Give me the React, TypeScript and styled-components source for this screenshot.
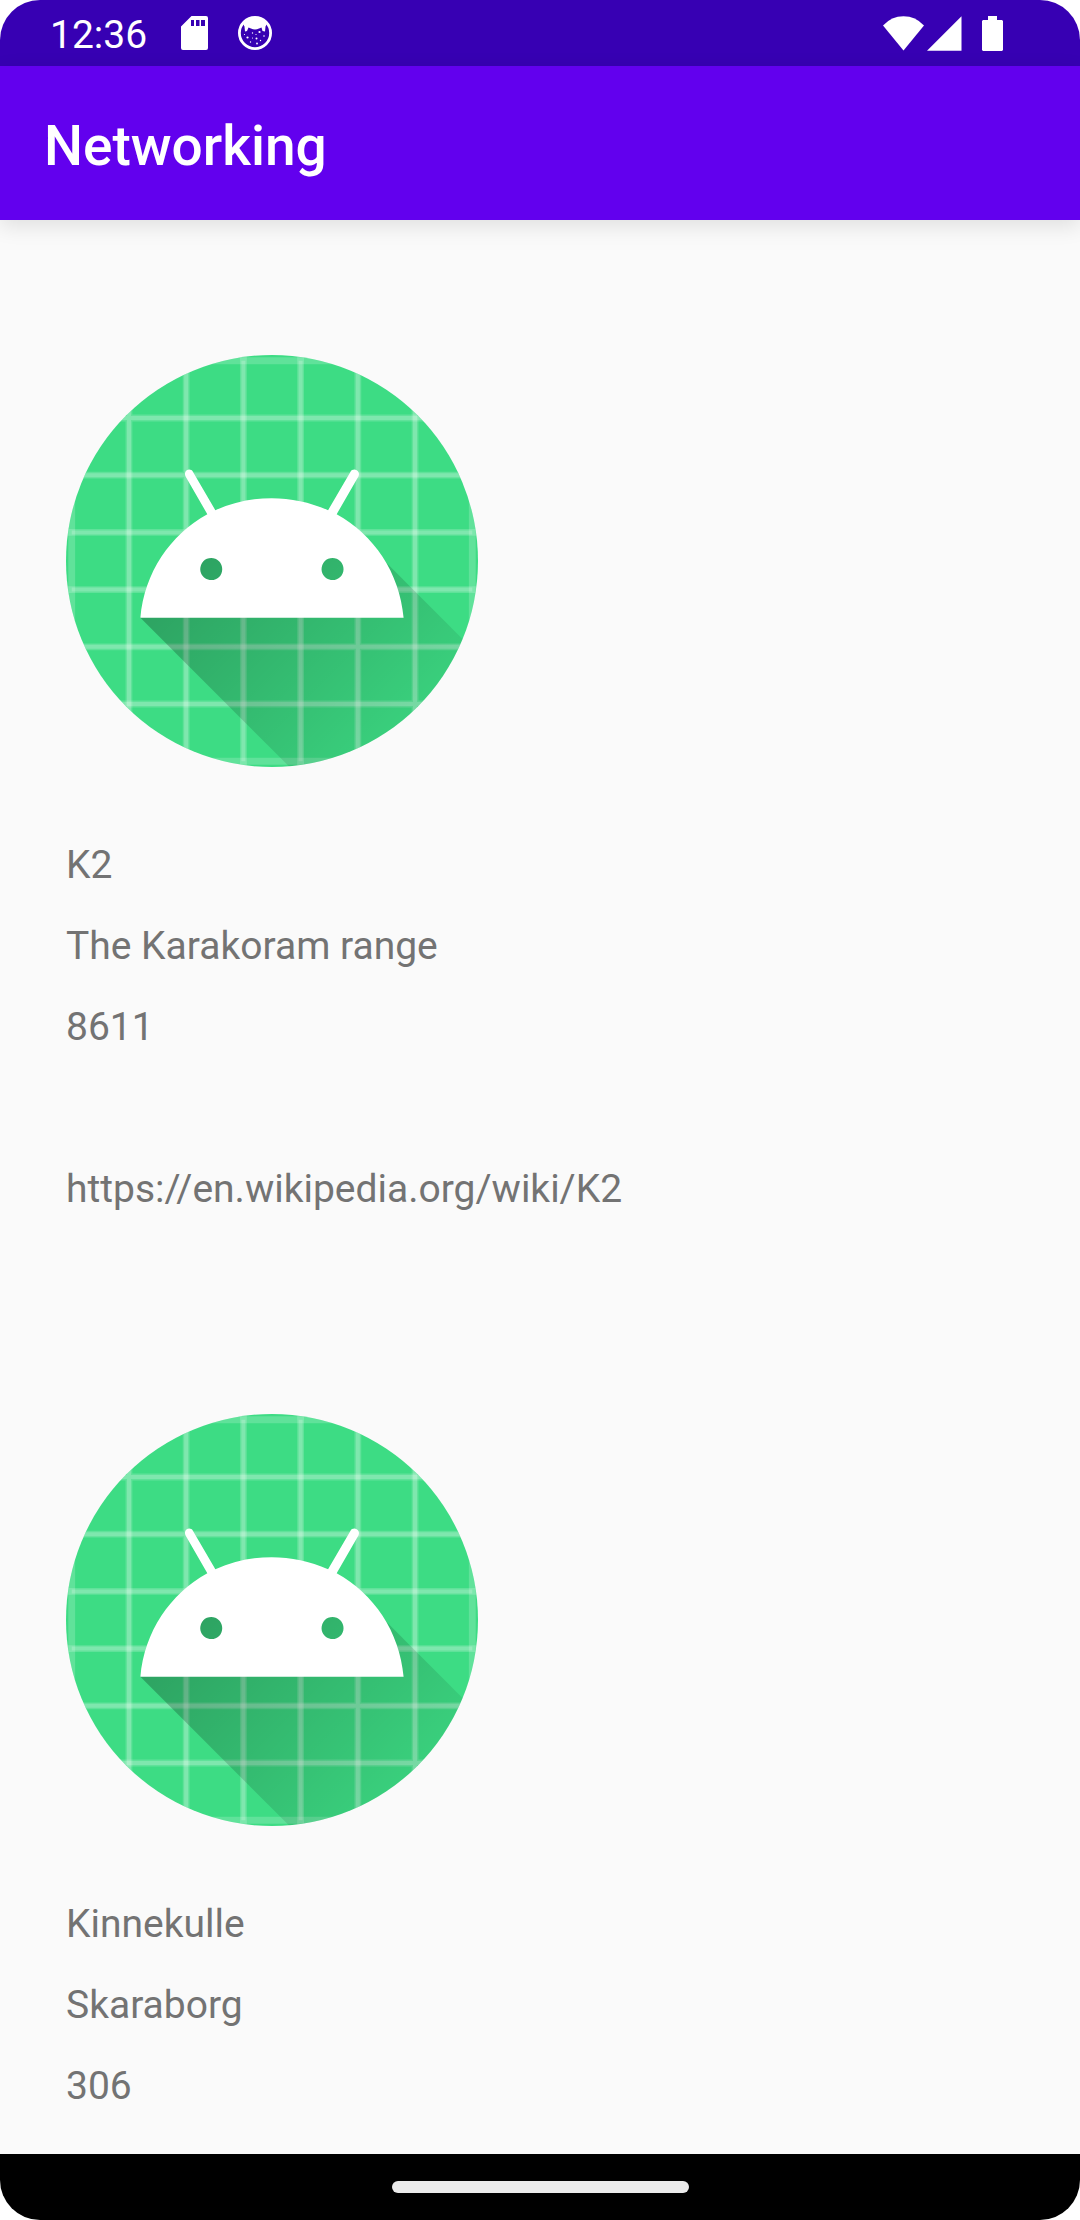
import React from "react";
import styled, { createGlobalStyle } from "styled-components";

const GlobalStyle = createGlobalStyle`
  * { box-sizing: border-box; }
  body {
    margin: 0;
    background: #ffffff;
    font-family: Roboto, "Noto Sans", sans-serif;
  }
`;

const Screen = styled.div`
  display: flex;
  flex-direction: column;
  height: 100vh;
  overflow: hidden;
  border-radius: 40px;
  background: #fafafa;
`;

const StatusBar = styled.div`
  display: flex;
  flex: none;
  align-items: center;
  justify-content: space-between;
  height: 66px;
  padding: 0 77px 0 50px;
  background: #3700b3;
  color: #ffffff;
`;

const StatusGroup = styled.div<{ $gap: number }>`
  display: flex;
  align-items: center;
  gap: ${(p) => p.$gap}px;
`;

const Clock = styled.time`
  padding: 4px 4px 0 0;
  font-size: 39px;
  line-height: 62px;
`;

const Glyph = styled.svg`
  display: block;
  flex: none;
  fill: currentColor;
`;

const AppBar = styled.header`
  z-index: 1;
  display: flex;
  flex: none;
  align-items: center;
  height: 154px;
  padding: 6px 44px 0;
  background: #6200ee;
  box-shadow: 0 6px 20px rgba(0, 0, 0, 0.11);
`;

const Title = styled.h1`
  margin: 0;
  color: #ffffff;
  font-size: 55px;
  font-weight: 500;
  line-height: 64px;
`;

const List = styled.ul`
  flex: 1;
  min-height: 0;
  margin: 0;
  padding: 0;
  overflow: hidden;
  list-style: none;
`;

const Item = styled.li`
  display: flex;
  flex-direction: column;
  align-items: flex-start;
  padding: 135px 66px 49px;
`;

const Picture = styled.svg`
  display: block;
  width: 412px;
  height: 412px;
  margin-bottom: 58px;
  border-radius: 50%;
`;

const Row = styled.div`
  min-height: 81px;
  color: #737373;
  font-size: 39px;
  line-height: 81px;
`;

const WikiLink = styled.a`
  color: inherit;
  text-decoration: none;
`;

const NavigationBar = styled.nav`
  display: flex;
  flex: none;
  align-items: center;
  justify-content: center;
  height: 66px;
  background: #000000;
`;

const HomeHandle = styled.button`
  width: 297px;
  height: 12px;
  padding: 0;
  border: 0;
  border-radius: 6px;
  background: #ebebeb;
`;

const INNER = [29, 39, 49, 59, 69, 79];
const OUTER = [19, ...INNER, 89];

function LauncherIcon({ id }: { id: string }) {
  return (
    <Picture viewBox="18 18 72 72" role="img" aria-label="Mountain picture">
      <defs>
        <linearGradient id={id} gradientUnits="userSpaceOnUse" x1="42.95" y1="49.6" x2="85.85" y2="92.5">
          <stop offset="0" stopColor="#000" stopOpacity="0.267" />
          <stop offset="1" stopColor="#000" stopOpacity="0" />
        </linearGradient>
      </defs>
      <rect x="18" y="18" width="72" height="72" fill="#3ddc84" />
      <g stroke="#fff" strokeOpacity="0.18" strokeWidth="1.2">
        {OUTER.map((n) => (
          <path key={n} d={`M${n},0V108M0,${n}H108`} />
        ))}
      </g>
      <g stroke="#fff" strokeOpacity="0.2" strokeWidth="0.7">
        {INNER.map((n) => (
          <path key={n} d={`M${n},19V89M19,${n}H89`} />
        ))}
      </g>
      <path
        fill={`url(#${id})`}
        d="M31,63.928c0,0 6.4,-11 12.1,-13.1c7.2,-2.6 26,-1.4 26,-1.4l38.1,38.1L107,108.928l-32,-1L31,63.928z"
      />
      <path
        fill="#fff"
        d="M65.3,45.828l3.8,-6.6c0.2,-0.4 0.1,-0.9 -0.3,-1.1c-0.4,-0.2 -0.9,-0.1 -1.1,0.3l-3.9,6.7c-6.3,-2.8 -13.4,-2.8 -19.7,0l-3.9,-6.7c-0.2,-0.4 -0.7,-0.5 -1.1,-0.3C38.8,38.328 38.7,38.828 38.9,39.228l3.8,6.6C36.2,49.428 31.7,56.028 31,63.928h46C76.3,56.028 71.8,49.428 65.3,45.828zM43.4,57.328c-0.8,0 -1.5,-0.5 -1.8,-1.2c-0.3,-0.7 -0.1,-1.5 0.4,-2.1c0.5,-0.5 1.4,-0.7 2.1,-0.4c0.7,0.3 1.2,1 1.2,1.8C45.3,56.528 44.5,57.328 43.4,57.328zM64.6,57.328c-0.8,0 -1.5,-0.5 -1.8,-1.2s-0.1,-1.5 0.4,-2.1c0.5,-0.5 1.4,-0.7 2.1,-0.4c0.7,0.3 1.2,1 1.2,1.8C66.5,56.528 65.6,57.328 64.6,57.328z"
      />
    </Picture>
  );
}

function SdCardIcon() {
  return (
    <Glyph width="27" height="34" viewBox="0 0 27 34" aria-hidden="true">
      <path
        fillRule="evenodd"
        d="M10.5 0H25q2 0 2 2V32q0 2-2 2H2q-2 0-2-2V10.500zM10 4v6h3V4zM15 4v6h3.500V4zM20 4v6h4V4z"
      />
    </Glyph>
  );
}

function DebugIcon() {
  return (
    <Glyph width="34" height="34" viewBox="0 0 34 34" aria-hidden="true">
      <circle cx="17" cy="17" r="15.600" fill="none" stroke="currentColor" strokeWidth="2.800" />
      <path d="M4.500 7Q10 1 17 1t12.500 6L27.500 10.500 27 15.500 24.500 15 23.500 11.500 21 12.500Q17 14.500 13 12.500L10.500 11.500 9 15 7 15.500 6.500 10.500z" />
      <g>
        <circle cx="21.500" cy="16" r="1.100" />
        <circle cx="9.500" cy="21.500" r="1.100" />
        <circle cx="18.500" cy="22.500" r="1" />
        <circle cx="14.500" cy="17" r="0.700" />
        <circle cx="26" cy="20" r="0.800" />
        <circle cx="19" cy="27.500" r="0.900" />
        <circle cx="12.500" cy="26" r="0.700" />
        <circle cx="14.500" cy="22" r="0.600" />
        <circle cx="22.500" cy="24.500" r="0.700" />
        <circle cx="6.500" cy="18.500" r="0.600" />
        <circle cx="18" cy="18.500" r="0.600" />
      </g>
    </Glyph>
  );
}

function WifiIcon() {
  return (
    <Glyph width="41" height="35" viewBox="0 0 41 35" aria-hidden="true">
      <path d="M20.500 34.500L0 9.500Q8.500 0.300 20.500 0.300T41 9.500z" />
    </Glyph>
  );
}

function SignalIcon() {
  return (
    <Glyph width="35" height="35" viewBox="0 0 35 35" aria-hidden="true">
      <path d="M0 34.700L34.500 0.300V34.700z" />
    </Glyph>
  );
}

function BatteryIcon() {
  return (
    <Glyph width="21" height="35" viewBox="0 0 21 35" aria-hidden="true">
      <path d="M6 0h9v4h5l1 1v29l-1 1H1l-1-1V5l1-1h5z" />
    </Glyph>
  );
}

interface Mountain {
  name: string;
  location: string;
  height: number;
  wiki?: string;
}

const mountains: Mountain[] = [
  { name: "K2", location: "The Karakoram range", height: 8611, wiki: "https://en.wikipedia.org/wiki/K2" },
  { name: "Kinnekulle", location: "Skaraborg", height: 306 },
];

export default function App() {
  return (
    <>
      <GlobalStyle />
      <Screen>
        <StatusBar>
          <StatusGroup $gap={30}>
            <Clock>12:36</Clock>
            <SdCardIcon />
            <DebugIcon />
          </StatusGroup>
          <StatusGroup $gap={20}>
            <StatusGroup $gap={3}>
              <WifiIcon />
              <SignalIcon />
            </StatusGroup>
            <BatteryIcon />
          </StatusGroup>
        </StatusBar>
        <AppBar>
          <Title>Networking</Title>
        </AppBar>
        <List>
          {mountains.map((m) => (
            <Item key={m.name}>
              <LauncherIcon id={`shade-${m.name}`} />
              <Row>{m.name}</Row>
              <Row>{m.location}</Row>
              <Row>{m.height}</Row>
              <Row />
              <Row>{m.wiki && <WikiLink href={m.wiki}>{m.wiki}</WikiLink>}</Row>
            </Item>
          ))}
        </List>
        <NavigationBar aria-label="System navigation">
          <HomeHandle type="button" aria-label="Home" />
        </NavigationBar>
      </Screen>
    </>
  );
}
